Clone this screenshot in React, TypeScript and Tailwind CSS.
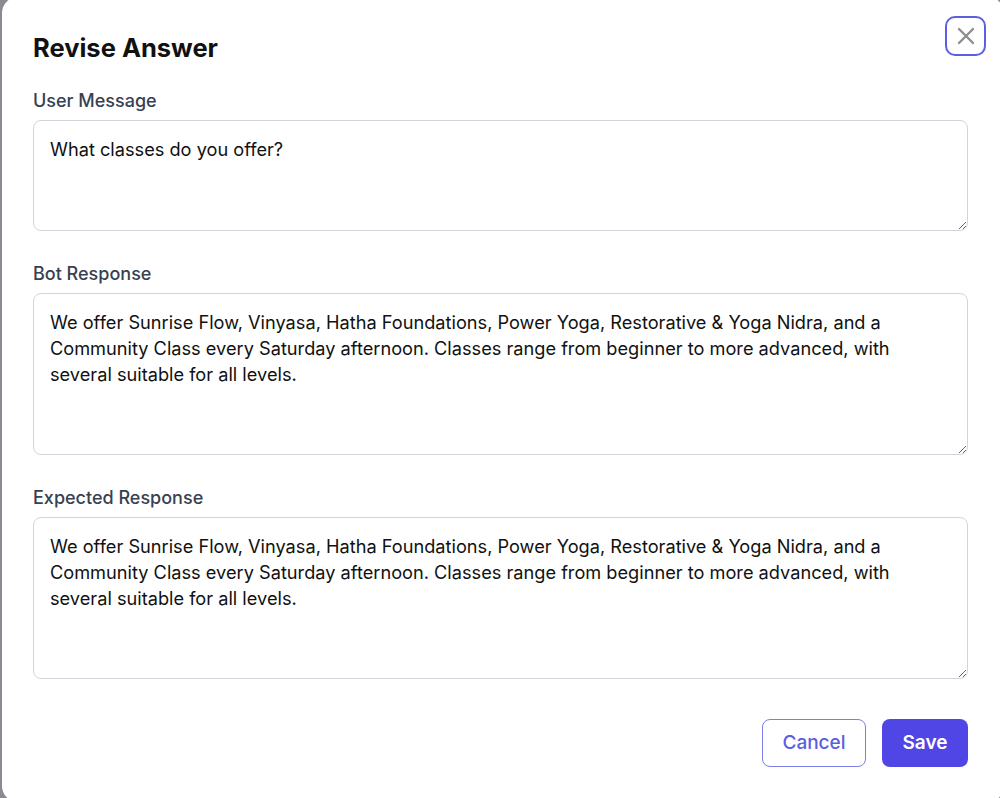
const fieldText =
  "We offer Sunrise Flow, Vinyasa, Hatha Foundations, Power Yoga, Restorative & Yoga Nidra, and a Community Class every Saturday afternoon. Classes range from beginner to more advanced, with several suitable for all levels.";

function Field({ label, value, height }: { label: string; value: string; height: string }) {
  return (
    <div className="flex flex-col">
      <label className="mb-[7px] text-[18px] leading-6 font-medium text-[#374151]">{label}</label>
      <textarea
        defaultValue={value}
        className={`${height} w-full rounded-lg border border-[#d1d5db] bg-white px-4 py-[15px] text-[18.2px] leading-[26px] text-[#111111] outline-none`}
      />
    </div>
  );
}

export default function App() {
  return (
    <div className="h-[798px] w-[1000px] overflow-hidden bg-[#8a8a93] font-['Inter',sans-serif]">
      <div className="relative -mt-[3px] ml-[2px] h-[805px] w-[1002px] rounded-2xl bg-white pl-[31px] pt-[35px]">
        <button className="absolute right-[18px] top-[19px] flex h-[40px] w-[41px] items-center justify-center rounded-[10px] border-2 border-[#5b5fe0] text-[#8e8e8e]">
          <svg className="h-[24px] w-[24px]" viewBox="0 0 24 24" fill="none" stroke="currentColor" strokeWidth={2.4} strokeLinecap="round">
            <path d="M5 5l14 14M19 5L5 19" />
          </svg>
        </button>

        <div className="flex w-[935px] flex-col">
          <h2 className="text-[25.5px] leading-8 font-bold text-[#111111]">Revise Answer</h2>

          <div className="mt-[25px] flex flex-col gap-[31px]">
            <Field label="User Message" value="What classes do you offer?" height="h-[111px]" />
            <Field label="Bot Response" value={fieldText} height="h-[162px]" />
            <Field label="Expected Response" value={fieldText} height="h-[162px]" />
          </div>

          <div className="mt-[40px] flex justify-end gap-4">
            <button className="h-[48px] w-[104px] rounded-lg border border-[#7b7fe6] bg-white text-[19px] font-medium text-[#5a5ee0]">
              Cancel
            </button>
            <button className="h-[48px] w-[86px] rounded-lg bg-[#4f46e5] text-[19px] font-semibold text-white">
              Save
            </button>
          </div>
        </div>
      </div>
    </div>
  );
}
